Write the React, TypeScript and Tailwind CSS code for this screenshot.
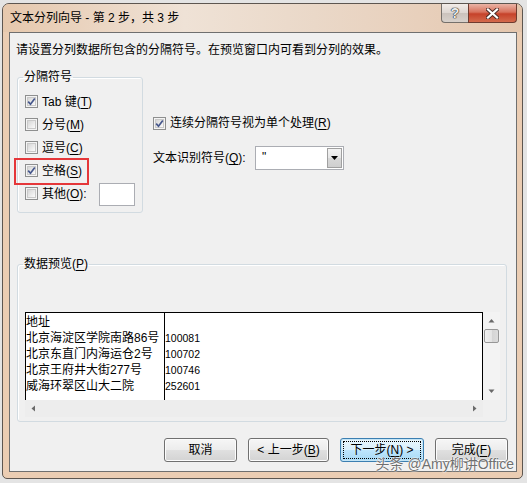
import React from 'react';

const Box = ({ on }: { on?: boolean }) => (
  <span className="relative flex h-[13px] w-[13px] shrink-0 items-center justify-center border border-[#8e8f8f] bg-[#f4f4f4]">
    <span className="absolute inset-[1px] border border-[#c9c9c9] bg-linear-to-br from-[#d6d6d6] to-[#fbfbfb]" />
    {on && (
      <svg width="9" height="9" viewBox="0 0 9 9" className="relative">
        <path d="M1.2 4.6 L3.5 7.2 L7.8 1.4" fill="none" stroke="#46578c" strokeWidth="1.7" />
      </svg>
    )}
  </span>
);

const Opt = ({ on, label, k, tail }: { on?: boolean; label: string; k: string; tail?: string }) => (
  <div className="flex h-[23px] items-center gap-[4px]">
    <Box on={on} />
    <span>
      {label}(<u className="underline-offset-2">{k}</u>){tail}
    </span>
  </div>
);

const Btn = ({ children, w, focus }: { children: React.ReactNode; w: string; focus?: boolean }) => (
  <div
    className={
      focus
        ? `relative flex h-[24px] ${w} items-center justify-center rounded-[3px] border border-[#3c7fb1] bg-[linear-gradient(#eaf6fd,#d9f0fc_50%,#bee6fd_50%,#a7d9f5)] shadow-[inset_0_0_0_1px_#c4e5f6]`
        : `flex h-[24px] ${w} items-center justify-center rounded-[3px] border border-[#707070] bg-[linear-gradient(#f6f6f6,#ececec_50%,#e0e0e0_50%,#d3d3d3)] shadow-[inset_0_0_0_1px_#fcfcfc]`
    }
  >
    {focus && <span className="absolute inset-[2px] border border-dotted border-black" />}
    <span className="relative">{children}</span>
  </div>
);

const Tri = ({ d }: { d: string }) => (
  <svg width="7" height="7" viewBox="0 0 7 7">
    <path d={d} fill="#6a6a6a" />
  </svg>
);

const names = ['地址', '北京海淀区学院南路86号', '北京东直门内海运仓2号', '北京王府井大街277号', '威海环翠区山大二院'];
const codes = ['', '100081', '100702', '100746', '252601'];

export default function App() {
  return (
    <div className="relative h-[483px] w-[527px] overflow-hidden bg-[#e4e4e4] pl-[2px] pt-[3px] font-['Liberation_Sans','Noto_Sans_CJK_SC',sans-serif] text-[12px] text-black">
      <div className="flex h-[476px] w-[521px] flex-col rounded-t-[7px] rounded-b-[5px] border border-[#5d5650] bg-[#ebcdb3] pb-[6px] pl-[6px] pr-[5px]">
        {/* title bar */}
        <div className="-ml-[6px] -mr-[5px] flex h-[28px] shrink-0 rounded-t-[6px] bg-[linear-gradient(90deg,#e6c8ad,#efe2d6_35%,#ead8c8_60%,#e8d0bc_80%,#e4c6ad)] pl-[7px] pr-[5px]">
          <div className="flex flex-1 items-center leading-[16px]">文本分列向导 - 第 2 步，共 3 步</div>
          <div className="flex self-start">
            <div className="flex h-[19px] w-[27px] items-center justify-center rounded-bl-[4px] border border-r-0 border-t-0 border-[#75706b] bg-[linear-gradient(#f2ece8,#ddd6d1_50%,#cac2bc_50%,#d8d1cb)]">
              <span className="text-[14px] font-bold leading-none text-[#ececec] [text-shadow:0_0_1px_#222,0_0_1px_#222,0_0_1px_#222]">?</span>
            </div>
            <div className="flex h-[19px] w-[49px] items-center justify-center rounded-br-[4px] border border-t-0 border-[#6e3b2f] bg-[linear-gradient(#eab4a6,#d8725d_45%,#c6422a_55%,#d46a4c)]">
              <svg width="13" height="11" viewBox="0 0 13 11">
                <path d="M2 1.5 L11 9.5 M11 1.5 L2 9.5" stroke="#4a2a24" strokeWidth="4" strokeLinecap="square" />
                <path d="M2 1.5 L11 9.5 M11 1.5 L2 9.5" stroke="#ffffff" strokeWidth="2.2" strokeLinecap="square" />
              </svg>
            </div>
          </div>
        </div>

        {/* client area */}
        <div className="flex-1 border border-[#6f6f6f] bg-[#f0f0f0]">
          <p className="ml-[6px] mt-[9px] leading-[16px]">请设置分列数据所包含的分隔符号。在预览窗口内可看到分列的效果。</p>

          <div className="mt-[12px] flex">
            <fieldset className="ml-[7px] h-[143px] w-[126px] rounded-[3px] border border-[#d2dbe1] shadow-[inset_1px_1px_0_#fff]">
              <legend className="ml-[5px] px-[1px] leading-[14px]">分隔符号</legend>
              <div className="pl-[7px] pt-[6px]">
                <Opt on label="Tab 键" k="T" />
                <Opt label="分号" k="M" />
                <Opt label="逗号" k="C" />
                <div className="relative">
                  <div className="absolute -left-[11px] -top-[1px] h-[27px] w-[75px] border-2 border-[#e5373a]" />
                  <Opt on label="空格" k="S" />
                </div>
                <div className="flex h-[23px] items-center">
                  <Box />
                  <span className="ml-[4px]">
                    其他(<u className="underline-offset-2">O</u>):
                  </span>
                  <div className="ml-[12px] mt-[1px] h-[23px] w-[36px] border border-[#abadb3] bg-white" />
                </div>
              </div>
            </fieldset>

            <div className="ml-[10px] flex flex-col">
              <div className="mt-[45px] flex h-[16px] items-center gap-[4px]">
                <Box on />
                <span>
                  连续分隔符号视为单个处理(<u className="underline-offset-2">R</u>)
                </span>
              </div>
              <div className="mt-[15px] flex items-center">
                <span className="w-[102px]">
                  文本识别符号(<u className="underline-offset-2">Q</u>):
                </span>
                <div className="flex h-[24px] w-[89px] border border-[#abadb3] bg-white">
                  <span className="flex-1 pl-[6px] leading-[20px]">"</span>
                  <div className="m-[1px] flex w-[15px] items-center justify-center border border-[#a0a0a0] bg-[linear-gradient(#f4f4f4,#e6e6e6_50%,#d8d8d8_50%,#cfcfcf)]">
                    <svg width="7" height="4" viewBox="0 0 7 4">
                      <path d="M0 0 H7 L3.5 4 Z" fill="#000" />
                    </svg>
                  </div>
                </div>
              </div>
            </div>
          </div>

          <fieldset className="ml-[7px] mt-[44px] h-[165px] w-[490px] rounded-[3px] border border-[#d2dbe1] shadow-[inset_1px_1px_0_#fff]">
            <legend className="ml-[5px] px-[1px] leading-[14px]">
              数据预览(<u className="underline-offset-2">P</u>)
            </legend>
            <div className="pl-[7px] pt-[41px]">
              <div className="flex">
                <div className="flex h-[88px] w-[458px] border-x border-t border-black bg-white">
                  <div className="w-[139px] border-r border-black pt-[1px]">
                    {names.map((n) => (
                      <div key={n} className="h-[16px] whitespace-nowrap leading-[16px]">
                        {n}
                      </div>
                    ))}
                  </div>
                  <div className="pt-[1px]">
                    {codes.map((c, i) => (
                      <div key={i} className="h-[16px] text-[10.5px] leading-[16px]">
                        {c}
                      </div>
                    ))}
                  </div>
                </div>
                <div className="flex h-[88px] w-[17px] flex-col items-center bg-[#f3f3f3]">
                  <div className="flex h-[17px] items-center justify-center">
                    <Tri d="M3.5 2 L6.5 5.5 H0.5 Z" />
                  </div>
                  <div className="h-[14px] w-[15px] rounded-[2px] border border-[#979797] bg-[linear-gradient(90deg,#f2f2f2,#e4e4e4_50%,#d4d4d4_50%,#dcdcdc)]" />
                  <div className="flex-1" />
                  <div className="flex h-[17px] items-center justify-center">
                    <Tri d="M0.5 1.5 H6.5 L3.5 5 Z" />
                  </div>
                </div>
              </div>
              <div className="flex h-[17px] w-[458px] items-center justify-between bg-[#ededed] px-[5px]">
                <Tri d="M1.5 3.5 L5 0.5 V6.5 Z" />
                <Tri d="M5.5 3.5 L2 0.5 V6.5 Z" />
              </div>
            </div>
          </fieldset>

          <div className="mt-[16px] flex justify-end gap-[11px] pr-[8px]">
            <Btn w="w-[73px]">取消</Btn>
            <Btn w="w-[81px]">
              &lt; 上一步(<u className="underline-offset-2">B</u>)
            </Btn>
            <Btn w="w-[84px]" focus>
              下一步(<u className="underline-offset-2">N</u>) &gt;
            </Btn>
            <Btn w="w-[73px]">
              完成(<u className="underline-offset-2">F</u>)
            </Btn>
          </div>
        </div>
      </div>

      <div className="absolute bottom-[11px] right-[13px] whitespace-nowrap text-[14px] leading-[16px] text-[#707070] [text-shadow:0_0_2px_#fff,0_0_1px_#fff,0_0_1px_#fff]">
        头条 @Amy柳讲Office
      </div>
    </div>
  );
}
